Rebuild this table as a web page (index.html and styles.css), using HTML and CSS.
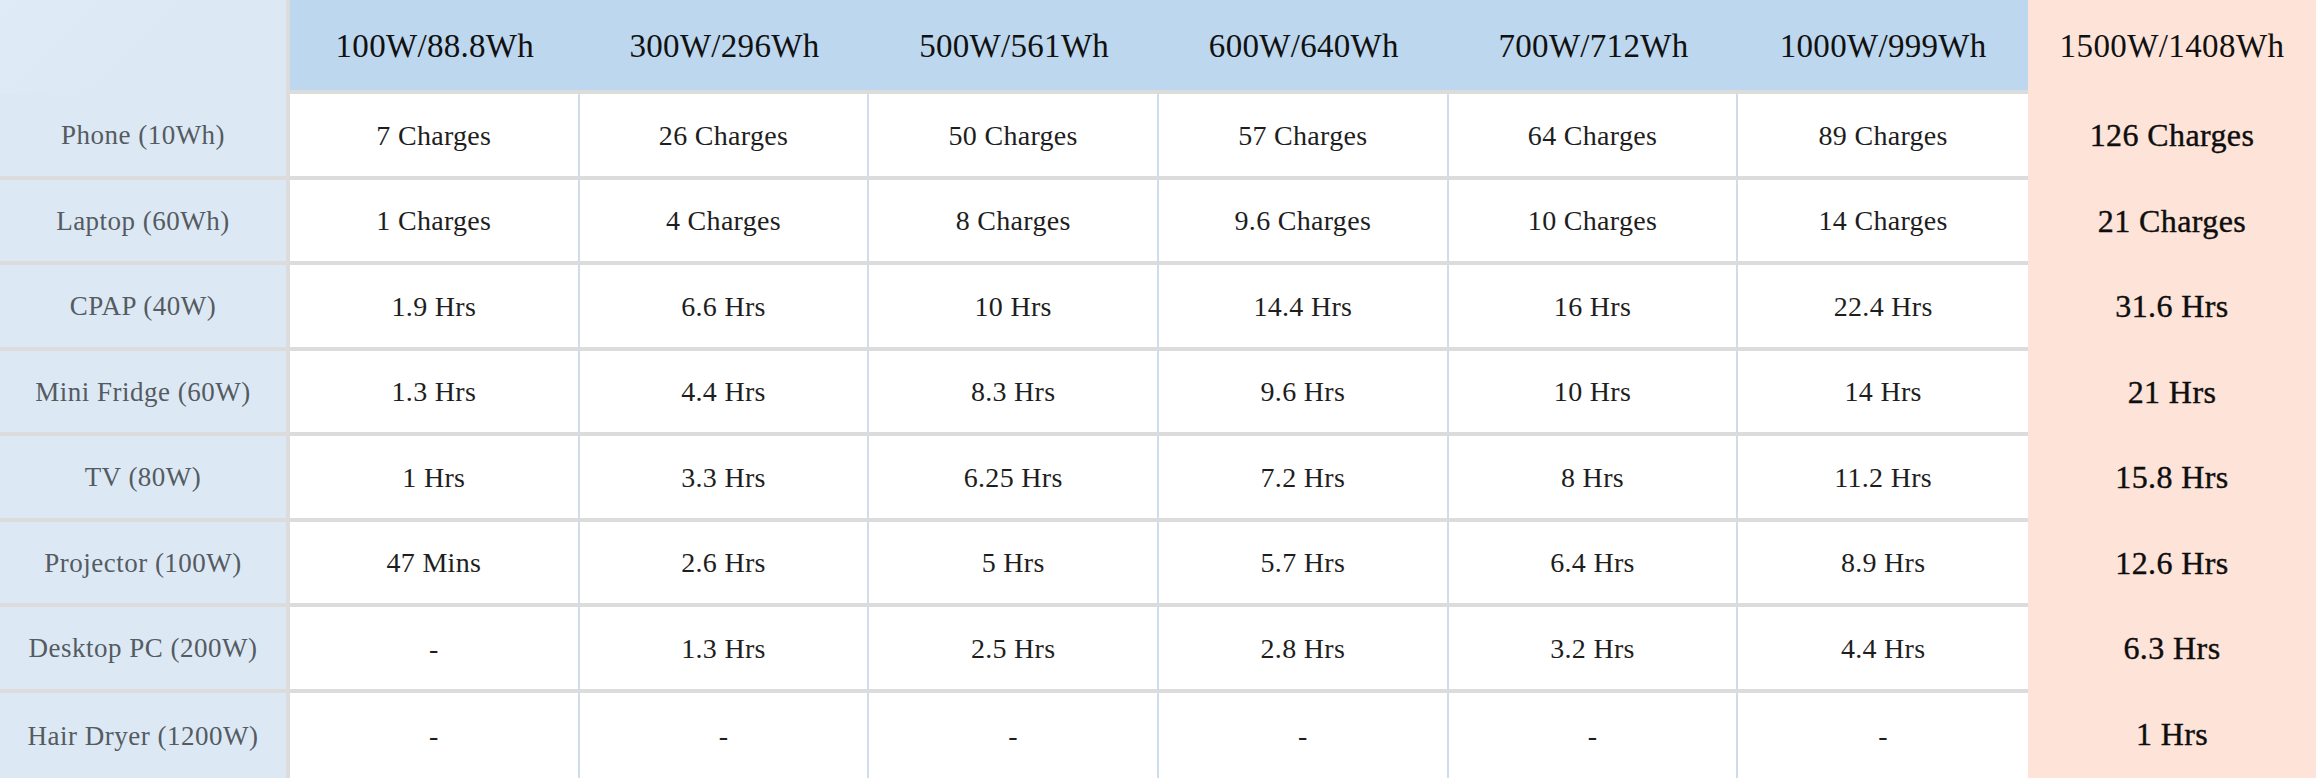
FILE: index.html
```html
<!DOCTYPE html>
<html lang="en">
<head>
<meta charset="utf-8">
<title>Runtime table</title>
<link rel="stylesheet" href="styles.css">
</head>
<body>
<div class="table">
  <div class="corner"></div>
  <div class="head">100W/88.8Wh</div>
  <div class="head">300W/296Wh</div>
  <div class="head">500W/561Wh</div>
  <div class="head">600W/640Wh</div>
  <div class="head">700W/712Wh</div>
  <div class="head last-data">1000W/999Wh</div>
  <div class="hi-head">1500W/1408Wh</div>

  <div class="label">Phone (10Wh)</div>
  <div class="cell">7 Charges</div>
  <div class="cell">26 Charges</div>
  <div class="cell">50 Charges</div>
  <div class="cell">57 Charges</div>
  <div class="cell">64 Charges</div>
  <div class="cell last-data">89 Charges</div>
  <div class="hi">126 Charges</div>

  <div class="label">Laptop (60Wh)</div>
  <div class="cell">1 Charges</div>
  <div class="cell">4 Charges</div>
  <div class="cell">8 Charges</div>
  <div class="cell">9.6 Charges</div>
  <div class="cell">10 Charges</div>
  <div class="cell last-data">14 Charges</div>
  <div class="hi">21 Charges</div>

  <div class="label">CPAP (40W)</div>
  <div class="cell">1.9 Hrs</div>
  <div class="cell">6.6 Hrs</div>
  <div class="cell">10 Hrs</div>
  <div class="cell">14.4 Hrs</div>
  <div class="cell">16 Hrs</div>
  <div class="cell last-data">22.4 Hrs</div>
  <div class="hi">31.6 Hrs</div>

  <div class="label">Mini Fridge (60W)</div>
  <div class="cell">1.3 Hrs</div>
  <div class="cell">4.4 Hrs</div>
  <div class="cell">8.3 Hrs</div>
  <div class="cell">9.6 Hrs</div>
  <div class="cell">10 Hrs</div>
  <div class="cell last-data">14 Hrs</div>
  <div class="hi">21 Hrs</div>

  <div class="label">TV (80W)</div>
  <div class="cell">1 Hrs</div>
  <div class="cell">3.3 Hrs</div>
  <div class="cell">6.25 Hrs</div>
  <div class="cell">7.2 Hrs</div>
  <div class="cell">8 Hrs</div>
  <div class="cell last-data">11.2 Hrs</div>
  <div class="hi">15.8 Hrs</div>

  <div class="label">Projector (100W)</div>
  <div class="cell">47 Mins</div>
  <div class="cell">2.6 Hrs</div>
  <div class="cell">5 Hrs</div>
  <div class="cell">5.7 Hrs</div>
  <div class="cell">6.4 Hrs</div>
  <div class="cell last-data">8.9 Hrs</div>
  <div class="hi">12.6 Hrs</div>

  <div class="label">Desktop PC (200W)</div>
  <div class="cell">-</div>
  <div class="cell">1.3 Hrs</div>
  <div class="cell">2.5 Hrs</div>
  <div class="cell">2.8 Hrs</div>
  <div class="cell">3.2 Hrs</div>
  <div class="cell last-data">4.4 Hrs</div>
  <div class="hi">6.3 Hrs</div>

  <div class="label bottom">Hair Dryer (1200W)</div>
  <div class="cell bottom">-</div>
  <div class="cell bottom">-</div>
  <div class="cell bottom">-</div>
  <div class="cell bottom">-</div>
  <div class="cell bottom">-</div>
  <div class="cell bottom last-data">-</div>
  <div class="hi">1 Hrs</div>
</div>
</body>
</html>
```

FILE: styles.css
```css
* { box-sizing: border-box; }
html, body {
  margin: 0;
  padding: 0;
  background: #ffffff;
}
body {
  width: 2316px;
  height: 778px;
  overflow: hidden;
  font-family: "Liberation Serif", "DejaVu Serif", serif;
}
.table {
  display: grid;
  grid-template-columns: 290px repeat(6, 1fr) 288px;
  grid-template-rows: 94px repeat(8, 85.5px);
  width: 2316px;
  height: 778px;
}
.table > div {
  display: flex;
  align-items: center;
  justify-content: center;
  text-align: center;
  white-space: nowrap;
}
.corner {
  background: linear-gradient(135deg, #dfebf6 0%, #dce9f5 50%);
  border-right: 4px solid #dcdcdc;
}
.head {
  background: #bdd7ee;
  border-bottom: 4px solid #dcdcdc;
  color: #111111;
  font-size: 33px;
  letter-spacing: 0.3px;
  padding-top: 3px;
}
.hi-head {
  background: #fde3d8;
  color: #111111;
  font-size: 33px;
  letter-spacing: 0.4px;
  padding-bottom: 1px;
}
.label {
  background: #dce9f5;
  border-right: 4px solid #dcdcdc;
  border-bottom: 4px solid #dcdcdc;
  color: #555b61;
  font-size: 27px;
  letter-spacing: 0.5px;
  padding-top: 2px;
}
.cell {
  background: #ffffff;
  border-right: 2px solid #cfdceb;
  border-bottom: 4px solid #dcdcdc;
  color: #1e1e1e;
  font-size: 28px;
  letter-spacing: 0.3px;
  padding-top: 2px;
}
.cell.last-data {
  border-right: none;
}
.bottom {
  border-bottom: none !important;
}
.hi {
  background: #fde3d8;
  color: #0e0e0e;
  font-size: 32px;
  letter-spacing: 0.4px;
  -webkit-text-stroke: 0.4px #0e0e0e;
  padding-bottom: 2px;
}
```
